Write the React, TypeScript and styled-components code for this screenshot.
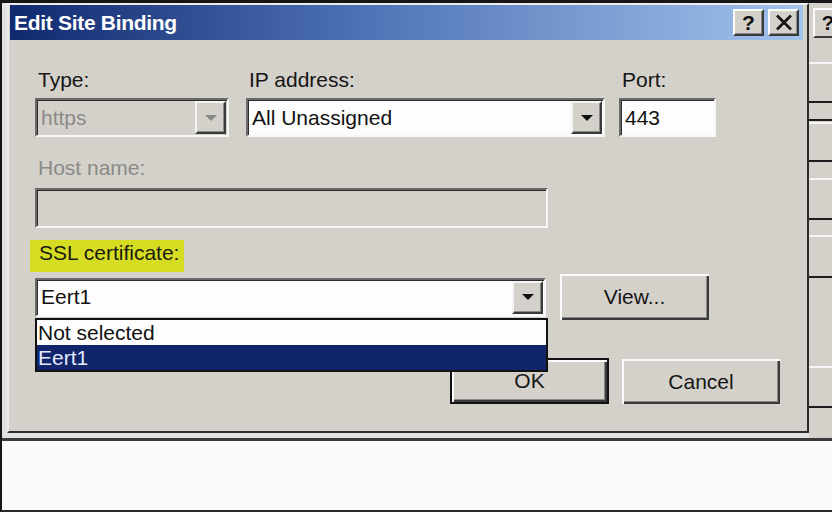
import React from 'react';
import styled, { createGlobalStyle } from 'styled-components';

const GlobalStyle = createGlobalStyle`
  html, body {
    margin: 0;
    padding: 0;
    background: #fafafa;
  }
  body {
    font-family: 'Liberation Sans', Arial, sans-serif;
  }
`;

const face = `'Liberation Sans', Arial, sans-serif`;

const Screen = styled.div`
  width: 832px;
  height: 512px;
  box-sizing: border-box;
  display: flex;
  flex-direction: column;
  border-left: 2px solid #151515;
  border-bottom: 2px solid #2a2a2a;
  background: #fafafa;
  overflow: hidden;
`;

const Desktop = styled.div`
  display: flex;
  height: 441px;
  box-sizing: border-box;
  padding-left: 5px;
  border-top: 3px solid #161616;
  border-bottom: 3px solid #3a3a3a;
  background: #e2e2e0;
`;

const Dialog = styled.div`
  width: 802px;
  height: 430px;
  box-sizing: border-box;
  display: flex;
  flex-direction: column;
  padding: 0 4px 0 1px;
  background: #d4d1cb;
  border: 2px solid;
  border-color: #ececec #2c2c2c #2c2c2c #ececec;
`;

const TitleBar = styled.div`
  height: 35px;
  flex-shrink: 0;
  display: flex;
  align-items: center;
  padding: 0 4px 0 4px;
  background: linear-gradient(to right, #10296f, #4f73b6 45%, #a2c3ec);
`;

const Title = styled.div`
  flex: 1;
  font-family: ${face};
  font-size: 21px;
  font-weight: bold;
  letter-spacing: -0.3px;
  color: #ffffff;
`;

const CaptionButton = styled.div`
  width: 31px;
  height: 27px;
  box-sizing: border-box;
  margin-left: 4px;
  display: flex;
  align-items: center;
  justify-content: center;
  background: #d4d1cb;
  border: 2px solid;
  border-color: #fbfbfb #3a3a3a #3a3a3a #fbfbfb;
  box-shadow: inset -1px -1px 0 #8a8a8a;
  font-family: ${face};
  font-size: 21px;
  font-weight: bold;
  color: #111;
`;

const Body = styled.div`
  flex: 1;
  display: flex;
  flex-direction: column;
  padding: 28px 23px 0 25px;
`;

const Row = styled.div<{ $mt?: number }>`
  display: flex;
  align-items: center;
  margin-top: ${(p) => p.$mt ?? 0}px;
`;

const Group = styled.div<{ $width: number; $ml?: number }>`
  width: ${(p) => p.$width}px;
  margin-left: ${(p) => p.$ml ?? 0}px;
  display: flex;
  flex-direction: column;
`;

const Label = styled.div<{ $disabled?: boolean; $mt?: number }>`
  font-family: ${face};
  font-size: 21px;
  line-height: 24px;
  padding-left: 3px;
  margin-top: ${(p) => p.$mt ?? 0}px;
  color: ${(p) => (p.$disabled ? '#8a8a88' : '#151515')};
`;

const Highlight = styled.div`
  align-self: flex-start;
  width: 154px;
  height: 32px;
  box-sizing: border-box;
  margin: 12px 0 0 -5px;
  padding: 1px 0 0 9px;
  background: #d6dc22;
  font-family: ${face};
  font-size: 21px;
  line-height: 24px;
  color: #1a1a10;
`;

const Sunken = styled.div<{ $width?: number; $height: number; $disabled?: boolean; $mt?: number }>`
  position: relative;
  width: ${(p) => (p.$width ? `${p.$width}px` : '100%')};
  height: ${(p) => p.$height}px;
  margin-top: ${(p) => p.$mt ?? 0}px;
  box-sizing: border-box;
  display: flex;
  align-items: stretch;
  padding: 1px;
  background: ${(p) => (p.$disabled ? '#d4d1cb' : '#fdfdfd')};
  border: 2px solid;
  border-color: #6a6a6a #f7f7f7 #f7f7f7 #6a6a6a;
  box-shadow: inset 1px 1px 0 #2c2c2c;
`;

const FieldText = styled.div<{ $disabled?: boolean }>`
  flex: 1;
  display: flex;
  align-items: center;
  padding-left: 3px;
  font-family: ${face};
  font-size: 21px;
  color: ${(p) => (p.$disabled ? '#8a8a88' : '#111')};
`;

const DropButton = styled.div`
  width: 31px;
  box-sizing: border-box;
  display: flex;
  align-items: center;
  justify-content: center;
  background: #d4d1cb;
  border: 2px solid;
  border-color: #f4f4f4 #3a3a3a #3a3a3a #f4f4f4;
  box-shadow: inset -1px -1px 0 #8a8a8a;
`;

const Arrow = styled.div<{ $disabled?: boolean }>`
  width: 0;
  height: 0;
  border-left: 6px solid transparent;
  border-right: 6px solid transparent;
  border-top: 6px solid ${(p) => (p.$disabled ? '#8a8a88' : '#111')};
`;

const List = styled.div`
  position: absolute;
  top: calc(100% + 3px);
  left: -2px;
  width: 513px;
  box-sizing: border-box;
  border: 2px solid #121212;
  background: #fdfdfd;
  z-index: 2;
`;

const ListItem = styled.div<{ $selected?: boolean }>`
  height: 25px;
  line-height: 25px;
  padding-left: 1px;
  font-family: ${face};
  font-size: 21px;
  background: ${(p) => (p.$selected ? '#10256a' : 'transparent')};
  color: ${(p) => (p.$selected ? '#e4eaff' : '#111')};
`;

const Button = styled.div<{ $width: number; $height: number; $default?: boolean; $ml?: number }>`
  width: ${(p) => p.$width}px;
  height: ${(p) => p.$height}px;
  margin-left: ${(p) => p.$ml ?? 0}px;
  box-sizing: border-box;
  display: flex;
  align-items: center;
  justify-content: center;
  background: #d4d1cb;
  font-family: ${face};
  font-size: 21px;
  color: #151515;
  border: ${(p) => (p.$default ? '2px solid #121212' : '0')};
  box-shadow: inset 2px 2px 0 #fbfbfb, inset -2px -2px 0 #3a3a3a, inset -3px -3px 0 #8a8a8a;
`;

const ButtonRow = styled.div`
  display: flex;
  justify-content: flex-end;
  align-items: flex-end;
  margin-top: 38px;
`;

const Strip = styled.div`
  flex: 1;
  display: flex;
  flex-direction: column;
  background: #d4d1cb;
  overflow: hidden;
`;

const StripTop = styled.div`
  height: 37px;
  flex-shrink: 0;
  box-sizing: border-box;
  padding: 5px 0 0 4px;
`;

const StripButton = styled.div`
  width: 30px;
  height: 30px;
  box-sizing: border-box;
  border: 2px solid;
  border-color: #fbfbfb #3a3a3a #3a3a3a #fbfbfb;
  font-family: ${face};
  font-size: 21px;
  font-weight: bold;
  line-height: 26px;
  text-align: center;
  color: #111;
`;

const StripCell = styled.div<{ $height?: number; $shine?: number }>`
  flex: ${(p) => (p.$height ? `0 0 ${p.$height}px` : '1')};
  box-sizing: border-box;
  border-bottom: ${(p) => (p.$height ? '2px solid #1e1e1e' : '0')};
  background: ${(p) =>
    p.$shine === undefined
      ? '#d4d1cb'
      : `linear-gradient(to bottom, #d4d1cb 0 ${p.$shine}px, #f6f6f6 ${p.$shine}px ${p.$shine + 2}px, #d4d1cb ${p.$shine + 2}px)`};
`;

const Ground = styled.div`
  flex: 1;
  background: #fafafa;
`;

const CloseGlyph = () => (
  <svg width="18" height="17" viewBox="0 0 18 17">
    <path d="M2 1.5 L16 15.5 M16 1.5 L2 15.5" stroke="#111" strokeWidth="2.6" />
  </svg>
);

const stripCells = [
  { h: 63, s: 22 },
  { h: 18 },
  { h: 41, s: 1 },
  { h: 58, s: 16 },
  { h: 58, s: 15 },
  { h: 130, s: 88 },
];

export default function App() {
  return (
    <>
      <GlobalStyle />
      <Screen>
        <Desktop>
          <Dialog>
            <TitleBar>
              <Title>Edit Site Binding</Title>
              <CaptionButton>?</CaptionButton>
              <CaptionButton>
                <CloseGlyph />
              </CaptionButton>
            </TitleBar>
            <Body>
              <Row>
                <Group $width={194}>
                  <Label>Type:</Label>
                  <Sunken $height={39} $mt={6} $disabled>
                    <FieldText $disabled>https</FieldText>
                    <DropButton>
                      <Arrow $disabled />
                    </DropButton>
                  </Sunken>
                </Group>
                <Group $width={359} $ml={17}>
                  <Label>IP address:</Label>
                  <Sunken $height={39} $mt={6}>
                    <FieldText>All Unassigned</FieldText>
                    <DropButton>
                      <Arrow />
                    </DropButton>
                  </Sunken>
                </Group>
                <Group $width={97} $ml={14}>
                  <Label>Port:</Label>
                  <Sunken $height={39} $mt={6}>
                    <FieldText>443</FieldText>
                  </Sunken>
                </Group>
              </Row>
              <Label $disabled $mt={19}>
                Host name:
              </Label>
              <Sunken $width={513} $height={40} $mt={8} $disabled>
                <FieldText $disabled />
              </Sunken>
              <Highlight>SSL certificate:</Highlight>
              <Row $mt={2}>
                <Sunken $width={511} $height={39}>
                  <FieldText>Eert1</FieldText>
                  <DropButton>
                    <Arrow />
                  </DropButton>
                  <List>
                    <ListItem>Not selected</ListItem>
                    <ListItem $selected>Eert1</ListItem>
                  </List>
                </Sunken>
                <Button $width={149} $height={46} $ml={14}>
                  View...
                </Button>
              </Row>
              <ButtonRow>
                <Button $width={159} $height={46} $default>
                  OK
                </Button>
                <Button $width={158} $height={45} $ml={13}>
                  Cancel
                </Button>
              </ButtonRow>
            </Body>
          </Dialog>
          <Strip>
            <StripTop>
              <StripButton>?</StripButton>
            </StripTop>
            {stripCells.map((c, i) => (
              <StripCell key={i} $height={c.h} $shine={c.s} />
            ))}
            <StripCell />
          </Strip>
        </Desktop>
        <Ground />
      </Screen>
    </>
  );
}
